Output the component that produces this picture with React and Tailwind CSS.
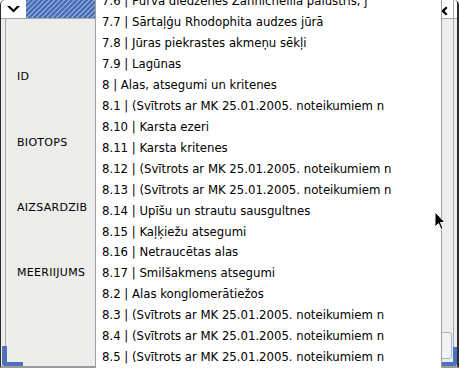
const rows = [
  "7.6 | Purva diedzenes Zannichellia palustris, j",
  "7.7 | Sārtaļģu Rhodophita audzes jūrā",
  "7.8 | Jūras piekrastes akmeņu sēkļi",
  "7.9 | Lagūnas",
  "8 | Alas, atsegumi un kritenes",
  "8.1 | (Svītrots ar MK 25.01.2005. noteikumiem n",
  "8.10 | Karsta ezeri",
  "8.11 | Karsta kritenes",
  "8.12 | (Svītrots ar MK 25.01.2005. noteikumiem n",
  "8.13 | (Svītrots ar MK 25.01.2005. noteikumiem n",
  "8.14 | Upīšu un strautu sausgultnes",
  "8.15 | Kaļķiežu atsegumi",
  "8.16 | Netraucētas alas",
  "8.17 | Smilšakmens atsegumi",
  "8.2 | Alas konglomerātiežos",
  "8.3 | (Svītrots ar MK 25.01.2005. noteikumiem n",
  "8.4 | (Svītrots ar MK 25.01.2005. noteikumiem n",
  "8.5 | (Svītrots ar MK 25.01.2005. noteikumiem n",
];

const labels = ["ID", "BIOTOPS", "AIZSARDZIB", "MEERIIJUMS"];

const Window = () => (
  <div className="flex h-full flex-col rounded-t-[5px] border-l border-r-2 border-b-2 border-l-[#2b2b2b] border-r-[#2b2b2b] border-b-[#9a9a9a]">
    {/* Title bar */}
    <div className="flex h-[19px] border-b border-[#a9a9a9]">
      <div className="flex w-[25px] items-center justify-center rounded-tl-[5px] bg-white">
        <svg width="13" height="7" viewBox="0 0 13 7">
          <path d="M0 0 L3 0 L6.5 3.5 L10 0 L13 0 L6.5 6.5 Z" fill="#000" />
        </svg>
      </div>
      <div className="flex-1 bg-[repeating-linear-gradient(135deg,#4a6cb2_0px,#4a6cb2_2px,#86a2d8_2px,#86a2d8_3.5px)]" />
      <div className="flex">
        <div className="w-[12px] bg-white">
          <svg width="12" height="19" viewBox="0 0 12 19">
            <path d="M0 11 L5 6.5 L6.5 8 L3.5 11 L6.5 14 L5 15.5 Z" fill="#000" />
          </svg>
        </div>
        <div className="w-px bg-[#a9a9a9]" />
        <div className="w-[3px] rounded-tr-[4px] bg-white" />
      </div>
    </div>

    {/* Body */}
    <div className="relative flex flex-1">
      <div className="w-[4px]" />
      <div className="flex flex-1 flex-col border-x border-[#a9a9a9] pt-[26px] pl-[11px]">
        {labels.map((l) => (
          <div
            key={l}
            className="flex h-[65.3px] items-center text-[11px] tracking-[0.3px] text-black"
          >
            {l}
          </div>
        ))}
      </div>
      <div className="w-[3px]" />

      {/* frame corner highlights */}
      <div className="absolute bottom-0 left-[1px] h-[20px] w-[21px] rounded-bl-[3px] border-l-[5px] border-b-[4px] border-[#4f71bb]" />
      <div className="absolute right-[5px] bottom-[7px] h-[27px] w-[14px] rounded-[3px] border border-[#98b4e2] bg-[#f3f3f3]" />
      <div className="absolute bottom-0 right-0 h-[19px] w-[16px] rounded-br-[3px] border-r-[4px] border-b-[4px] border-[#4f71bb]" />
    </div>
  </div>
);

const Popup = () => (
  <div className="absolute top-0 left-[95px] h-full w-[347px] overflow-hidden border-x border-[#9e9e9e] bg-white">
    <div className="-mt-[8.8px]">
      {rows.map((r) => (
        <div
          key={r}
          className="h-[20.95px] whitespace-nowrap pl-[6px] font-['DejaVu_Sans_Condensed','DejaVu_Sans',sans-serif] text-[13px] leading-[20.95px] text-black font-stretch-condensed"
        >
          {r}
        </div>
      ))}
    </div>
  </div>
);

const Cursor = () => (
  <svg
    className="absolute top-[211px] left-[434px]"
    width="12"
    height="20"
    viewBox="0 0 12 20"
  >
    <path
      d="M1 1 L1 16 L4.5 12.5 L7 18.5 L9 17.5 L6.5 11.5 L11 11.5 Z"
      fill="#000"
      stroke="#fff"
      strokeWidth="1"
      strokeLinejoin="round"
    />
  </svg>
);

export default function App() {
  return (
    <div className="relative h-[368px] w-[459px] overflow-hidden bg-[#ededeb] font-['DejaVu_Sans',sans-serif]">
      <Window />
      <Popup />
      <Cursor />
    </div>
  );
}
